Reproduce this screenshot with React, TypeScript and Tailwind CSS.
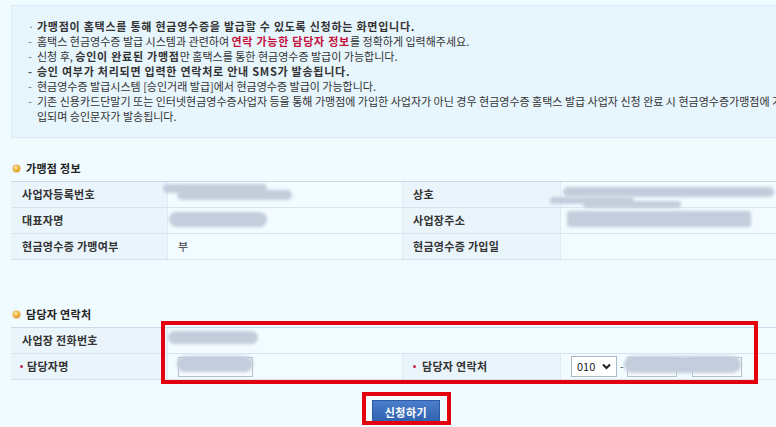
import React from "react";

const Blob = ({ x, y, w, h, r = "rounded-full" }: { x: number; y: number; w: number; h: number; r?: string }) => (
  <div
    className={`absolute bg-[#c3cddb] blur-[1.5px] ${r}`}
    style={{ left: x, top: y, width: w, height: h }}
  />
);

const Heading = ({ children }: { children: React.ReactNode }) => (
  <div className="flex items-center h-[16px] gap-[5px] pl-[1px]">
    <span className="w-[9px] h-[9px] rounded-full bg-[radial-gradient(circle_at_40%_35%,#fff1b8_0%,#f0b23a_45%,#c9800f_100%)] border border-[#e8c88a]" />
    <span className="text-[11px] font-bold text-[#222] leading-[16px] tracking-[0.3px]">{children}</span>
  </div>
);

const Label = ({ children, w, req, pl = "pl-[11px]" }: { children: React.ReactNode; w: string; req?: boolean; pl?: string }) => (
  <div className={`${w} shrink-0 h-full bg-[#e9f4fb] border-r border-[#dfeaf3] flex items-center ${pl} text-[11px] font-bold text-[#333] tracking-[0.3px]`}>
    {req && <span className="w-[3px] h-[3px] rounded-full bg-[#c8264b] mr-[4px]" />}
    {children}
  </div>
);

const Value = ({ children, w }: { children?: React.ReactNode; w: string }) => (
  <div className={`${w} h-full bg-[#f2fbff] border-r border-[#dfeaf3] flex items-center pl-[10px] text-[11px] text-[#333]`}>
    {children}
  </div>
);

const Row = ({ children }: { children: React.ReactNode }) => (
  <div className="flex h-[26px] border-b border-[#d5e4f0]">{children}</div>
);

export default function App() {
  return (
    <div className="relative w-[776px] h-[427px] overflow-hidden bg-[#f0fbff] font-['Noto_Sans_CJK_KR','Noto_Sans',sans-serif]">
      <div className="pl-[11px] pt-[5px]">
        <div className="w-[785px]">
          {/* Info box */}
          <div className="border border-[#d8ebf6] bg-[#e7f5fd] pl-[16px] pt-[13px] pb-[13px] text-[11px] leading-[15px] text-[#333] whitespace-nowrap">
            <div className="flex">
              <span className="w-[9px] text-[#888]">·</span>
              <span className="font-bold tracking-[0.75px]">가맹점이 홈택스를 통해 현금영수증을 발급할 수 있도록 신청하는 화면입니다.</span>
            </div>
            <div className="flex">
              <span className="w-[9px] text-[#777]">-</span>
              <span>
                홈택스 현금영수증 발급 시스템과 관련하여 <b className="text-[#c5123a] tracking-[0.75px]">연락 가능한 담당자 정보</b>를 정확하게 입력해주세요.
              </span>
            </div>
            <div className="flex">
              <span className="w-[9px] text-[#777]">-</span>
              <span>
                신청 후, <b className="tracking-[0.75px]">승인이 완료된 가맹점</b>만 홈택스를 통한 현금영수증 발급이 가능합니다.
              </span>
            </div>
            <div className="flex font-bold">
              <span className="w-[9px] text-[#555]">-</span>
              <span className="tracking-[0.75px]">승인 여부가 처리되면 입력한 연락처로 안내 SMS가 발송됩니다.</span>
            </div>
            <div className="flex">
              <span className="w-[9px] text-[#777]">-</span>
              <span>현금영수증 발급시스템 [승인거래 발급]에서 현금영수증 발급이 가능합니다.</span>
            </div>
            <div className="flex">
              <span className="w-[9px] text-[#777]">-</span>
              <span>
                기존 신용카드단말기 또는 인터넷현금영수증사업자 등을 통해 가맹점에 가입한 사업자가 아닌 경우 현금영수증 홈택스 발급 사업자 신청 완료 시 현금영수증가맹점에 가
                <br />
                입되며 승인문자가 발송됩니다.
              </span>
            </div>
          </div>

          {/* Section 1 */}
          <div className="mt-[22px]">
            <Heading>가맹점 정보</Heading>
          </div>
          <div className="mt-[5px] border-t border-[#c6daea]">
            <Row>
              <Label w="w-[157px]">사업자등록번호</Label>
              <Value w="w-[235px]" />
              <Label w="w-[158px]" pl="pl-[10px]">상호</Label>
              <Value w="flex-1" />
            </Row>
            <Row>
              <Label w="w-[157px]">대표자명</Label>
              <Value w="w-[235px]" />
              <Label w="w-[158px]" pl="pl-[10px]">사업장주소</Label>
              <Value w="flex-1" />
            </Row>
            <Row>
              <Label w="w-[157px]">현금영수증 가맹여부</Label>
              <Value w="w-[235px]">부</Value>
              <Label w="w-[158px]" pl="pl-[10px]">현금영수증 가입일</Label>
              <Value w="flex-1" />
            </Row>
          </div>

          {/* Section 2 */}
          <div className="mt-[46px]">
            <Heading>담당자 연락처</Heading>
          </div>
          <div className="mt-[5px] border-t border-[#c6daea]">
            <Row>
              <Label w="w-[157px]">사업장 전화번호</Label>
              <Value w="flex-1" />
            </Row>
            <Row>
              <Label w="w-[157px]" req pl="pl-[9px]">담당자명</Label>
              <Value w="w-[235px]">
                <div className="w-[75px] h-[20px] border border-[#b3c1cf] bg-[#f8fcff]" />
              </Value>
              <Label w="w-[158px]" req pl="pl-[10px]">
                <span className="ml-[2px]">담당자 연락처</span>
              </Label>
              <Value w="flex-1">
                <div className="flex items-center">
                  <div className="w-[46px] h-[21px] border border-[#a9b8c8] bg-white flex items-center justify-between pl-[5px] pr-[5px] text-[11px] text-[#222]">
                    <span>010</span>
                    <svg width="9" height="7" viewBox="0 0 9 7">
                      <path d="M1 1.5 L4.5 5 L8 1.5" stroke="#222" strokeWidth="2" fill="none" />
                    </svg>
                  </div>
                  <span className="ml-[3px] w-[7px] text-[#555]">-</span>
                  <div className="w-[50px] h-[20px] border border-[#b3c1cf] bg-[#f8fcff]" />
                  <span className="w-[15px] text-center text-[#555]">-</span>
                  <div className="w-[50px] h-[20px] border border-[#b3c1cf] bg-[#f8fcff]" />
                </div>
              </Value>
            </Row>
          </div>

          {/* Button */}
          <div className="mt-[20px] ml-[361px]">
            <div className="w-[68px] h-[24px] bg-gradient-to-b from-[#4a7dcb] to-[#2f60ae] border border-[#2d5aa3] flex items-center justify-center text-[11px] font-bold text-white tracking-[0.5px]">
              신청하기
            </div>
          </div>
        </div>
      </div>

      {/* Redaction blobs */}
      <Blob x={163} y={184} w={104} h={9} />
      <Blob x={177} y={190} w={115} h={10} />
      <Blob x={169} y={212} w={98} h={15} />
      <Blob x={563} y={187} w={211} h={10} />
      <Blob x={550} y={197} w={84} h={7} />
      <Blob x={583} y={201} w={98} h={7} />
      <Blob x={567} y={211} w={184} h={16} r="rounded-[3px]" />
      <Blob x={168} y={331} w={90} h={13} />
      <Blob x={177} y={356} w={76} h={16} />
      <Blob x={624} y={356} w={117} h={17} />

      {/* Red highlight boxes */}
      <div className="absolute left-[161px] top-[321px] w-[597px] h-[63px] border-[4px] border-[#e3000f]" />
      <div className="absolute left-[362px] top-[392px] w-[89px] h-[33px] border-[4px] border-[#e3000f]" />
    </div>
  );
}
